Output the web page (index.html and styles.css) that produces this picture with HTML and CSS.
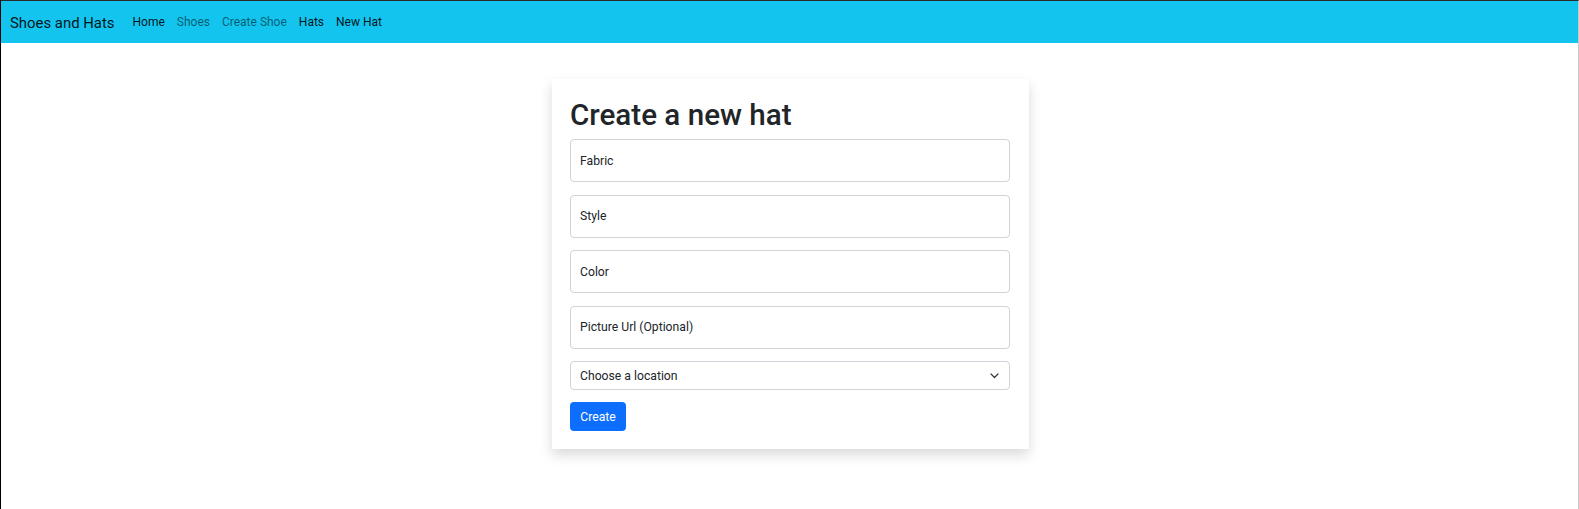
FILE: index.html
```html
<!DOCTYPE html>
<html lang="en">
<head>
<meta charset="utf-8">
<title>Shoes and Hats</title>
<link rel="stylesheet" href="styles.css">
</head>
<body>
<div class="frame">
  <nav class="navbar">
    <a class="brand" href="#">Shoes and Hats</a>
    <ul class="nav">
      <li><a class="nav-link active" href="#">Home</a></li>
      <li><a class="nav-link" href="#">Shoes</a></li>
      <li><a class="nav-link" href="#">Create Shoe</a></li>
      <li><a class="nav-link active" href="#">Hats</a></li>
      <li><a class="nav-link active" href="#">New Hat</a></li>
    </ul>
  </nav>
  <main class="main">
    <div class="card">
      <h1 class="title">Create a new hat</h1>
      <form class="form">
        <div class="field"><span class="label">Fabric</span></div>
        <div class="field"><span class="label">Style</span></div>
        <div class="field"><span class="label">Color</span></div>
        <div class="field"><span class="label">Picture Url (Optional)</span></div>
        <div class="select">
          <span class="label">Choose a location</span>
          <svg class="chev" width="9" height="6" viewBox="0 0 9 6"><path d="M1 1 L4.5 4.5 L8 1" fill="none" stroke="#343a40" stroke-width="1.2" stroke-linecap="round" stroke-linejoin="round"/></svg>
        </div>
        <button type="button" class="btn">Create</button>
      </form>
    </div>
  </main>
</div>
</body>
</html>
```

FILE: styles.css
```css
* { box-sizing: border-box; }
html, body { margin: 0; padding: 0; }
body {
  font-family: Roboto, "Noto Sans", "Liberation Sans", sans-serif;
  color: #212529;
  background: #fff;
}
.frame {
  height: 509px;
  border-top: 1px solid #2b2b2b;
  border-left: 1px solid #000;
  border-right: 1px solid #c8c8c8;
  overflow: hidden;
}
.navbar {
  display: flex;
  align-items: center;
  height: 42px;
  background: #12c4ee;
  padding: 0 9px;
}
.brand {
  font-size: 14.9px;
  color: rgba(0,0,0,0.9);
  text-decoration: none;
  margin-right: 12px;
  margin-top: 1px;
}
.nav {
  display: flex;
  list-style: none;
  margin: 0;
  padding: 0;
}
.nav-link {
  display: block;
  padding: 6px;
  font-size: 12px;
  color: rgba(0,0,0,0.55);
  text-decoration: none;
}
.nav-link.active { color: rgba(0,0,0,0.9); }
.main {
  display: flex;
  justify-content: center;
  padding-top: 36px;
  padding-left: 2px;
}
.card {
  width: 477px;
  background: #fff;
  padding: 18px 19px 18px 18px;
  box-shadow: 0 6px 12px rgba(0,0,0,0.15);
}
.title {
  margin: 0 0 6px;
  font-size: 29.6px;
  font-weight: 500;
  line-height: 36px;
  color: #212529;
}
.form {
  display: flex;
  flex-direction: column;
}
.field {
  height: 43px;
  border: 1px solid #ced4da;
  border-radius: 4px;
  display: flex;
  align-items: center;
  padding: 0 9px;
  margin-bottom: 12.5px;
}
.label {
  font-size: 12.2px;
  color: #212529;
}
.select {
  height: 29px;
  border: 1px solid #ced4da;
  border-radius: 4px;
  display: flex;
  align-items: center;
  justify-content: space-between;
  padding: 0 10px 0 9px;
  margin-bottom: 12px;
}
.chev { display: block; }
.btn {
  align-self: flex-start;
  width: 56px;
  height: 29px;
  border: none;
  border-radius: 4px;
  background: #0d6efd;
  color: #fff;
  font-family: inherit;
  font-size: 12.2px;
  padding: 0;
}
```
